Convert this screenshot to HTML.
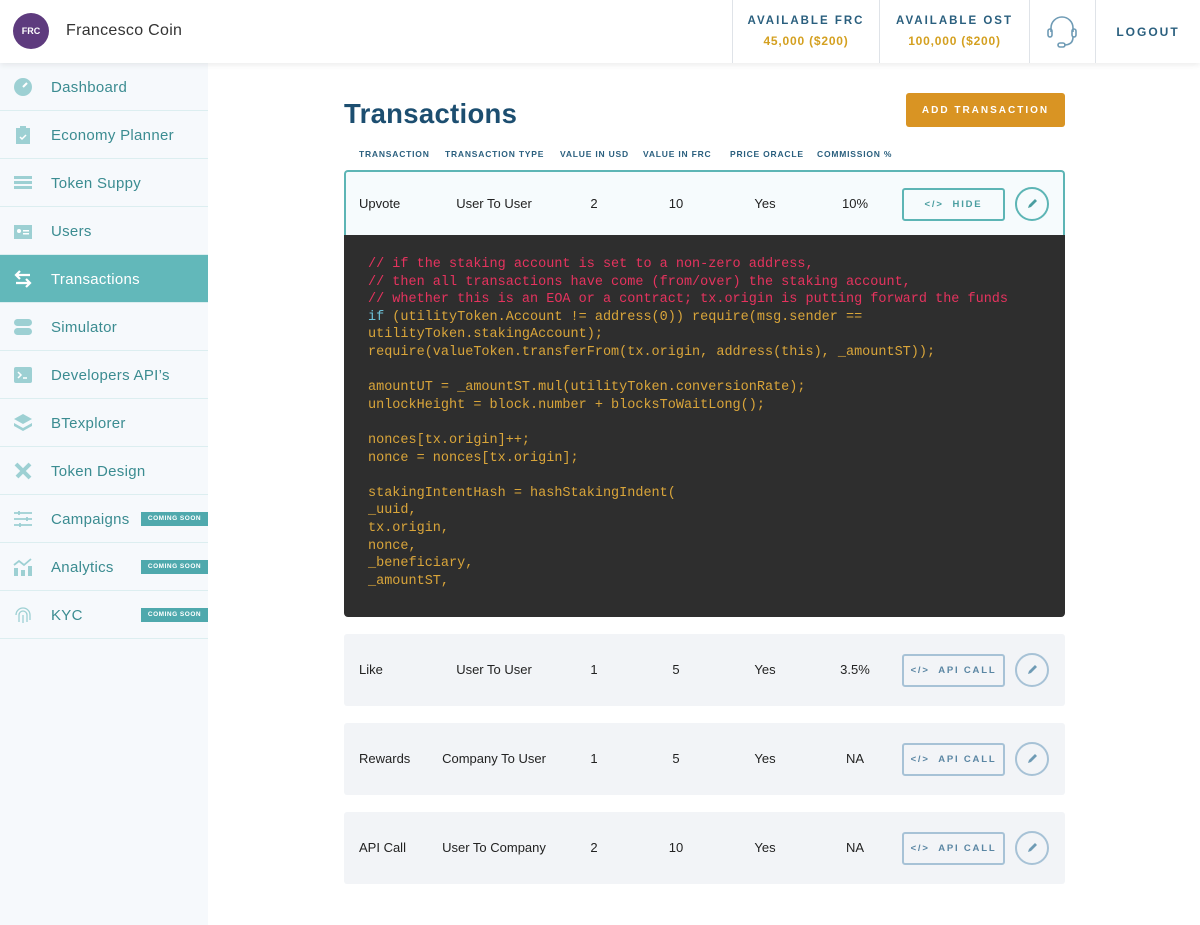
<!DOCTYPE html>
<html><head><meta charset="utf-8"><style>
*{margin:0;padding:0;box-sizing:border-box}
body{width:1200px;height:925px;background:#fff;font-family:"Liberation Sans",sans-serif;position:relative;overflow:hidden}
.hdr{position:absolute;left:0;top:0;width:1200px;height:63px;background:#fff;box-shadow:0 2px 6px rgba(0,0,0,.08);z-index:2}
.av{position:absolute;left:13px;top:13px;width:36px;height:36px;border-radius:50%;background:#5e3b7e;color:#fff;font-size:9px;font-weight:bold;text-align:center;line-height:36px}
.name{position:absolute;left:66px;top:22px;font-size:16px;color:#333;letter-spacing:.3px}
.sep{position:absolute;top:0;width:1px;height:63px;background:#dfe3e8}
.bal{position:absolute;top:15px;text-align:center;font-weight:bold;letter-spacing:2px;font-size:11.5px;color:#2a5f7e}
.bal div{color:#d4a020;font-size:12px;letter-spacing:.8px;margin-top:7px}
.side{position:absolute;left:0;top:63px;width:208px;height:862px;background:#f6f9fc}
.it{height:48px;border-bottom:1px solid #dceef0;position:relative;color:#3b8c91;font-size:15px;letter-spacing:.3px}
.it span.t{position:absolute;left:51px;top:16px}
.it .ic{position:absolute;left:13px;top:14px;width:20px;height:20px}
.it.act{background:#62b8ba;color:#fff}
.cs{position:absolute;left:141px;top:17px;width:67px;height:14px;background:#4fa9ad;color:#fff;font-size:6.5px;font-weight:bold;text-align:center;line-height:14px;letter-spacing:.5px}
h1{position:absolute;left:344px;top:98px;font-size:27.5px;color:#1c4e70;font-weight:bold;letter-spacing:.3px}
.add{position:absolute;left:906px;top:93px;width:159px;height:34px;background:#d99423;border-radius:3px;color:#fff;font-size:10px;font-weight:bold;letter-spacing:2px;text-align:center;line-height:35px}
.th{position:absolute;top:149px;font-size:8.5px;font-weight:bold;color:#2a5f7e;letter-spacing:.8px}
.row{position:absolute;left:344px;width:721px;height:72px;background:#f2f4f7;border-radius:3px;font-size:13px;color:#222}
.row.first{top:170px;height:66px;background:#f6fbfd;border:2px solid #5db5b5;border-bottom:none;border-radius:4px 4px 0 0}
.c{position:absolute;top:28px}
.first .c{top:24px}
.cc{transform:translateX(-50%)}
.btn{position:absolute;left:558px;top:20px;width:103px;height:33px;border:2px solid #a7c2d6;border-radius:3px;font-size:9.5px;font-weight:bold;color:#5a86a3;letter-spacing:1.8px;text-align:center;line-height:29px}
.first .btn{left:556px;top:16px;border-color:#5db5b5;color:#4a9ea0}
.ed{position:absolute;left:671px;top:19px;width:34px;height:34px;border:2px solid #a7c2d6;border-radius:50%}
.first .ed{left:669px;top:15px;border-color:#5db5b5}
.code{position:absolute;left:344px;top:235px;width:721px;height:382px;background:#2e2e2e;border-radius:0 0 4px 4px;padding:21px 0 0 24px;font-family:"Liberation Mono",monospace;font-size:13.5px;line-height:17.6px;color:#d9a53a;white-space:pre}
.cm{color:#e5335e}.kw{color:#6cc0d6}
</style></head><body>
<div class="hdr">
<div class="av">FRC</div><div class="name">Francesco Coin</div>
<div class="sep" style="left:732px"></div><div class="sep" style="left:879px"></div><div class="sep" style="left:1029px"></div><div class="sep" style="left:1095px"></div>
<div class="bal" style="left:733px;width:146px">AVAILABLE FRC<div>45,000 ($200)</div></div>
<div class="bal" style="left:880px;width:149px">AVAILABLE OST<div>100,000 ($200)</div></div>
<svg style="position:absolute;left:1046px;top:15px" width="32" height="34" viewBox="0 0 32 34" fill="none" stroke="#6f9bb5" stroke-width="1.6"><path d="M5 17V13a11 11 0 0 1 22 0v4"/><rect x="2" y="14" width="4" height="8" rx="2"/><rect x="26" y="14" width="4" height="8" rx="2"/><path d="M27 22c0 6-4 8-9 8"/><rect x="12" y="28" width="7" height="4" rx="2"/></svg>
<div class="bal" style="left:1096px;width:104px;top:25px;font-size:12px">LOGOUT</div>
</div>
<div class="side">
<div class="it"><svg class="ic" viewBox="0 0 20 20"><circle cx="10" cy="10" r="9" fill="#9dd0d3"/><path d="M10 10l4-4" stroke="#fff" stroke-width="2"/></svg><span class="t">Dashboard</span></div>
<div class="it"><svg class="ic" viewBox="0 0 20 20"><rect x="3" y="3" width="14" height="16" fill="#9dd0d3"/><rect x="7" y="1" width="6" height="4" fill="#9dd0d3"/><path d="M7 12l2 2 4-4" stroke="#fff" stroke-width="1.5" fill="none"/></svg><span class="t">Economy Planner</span></div>
<div class="it"><svg class="ic" viewBox="0 0 20 20" fill="#9dd0d3"><rect x="1" y="3" width="18" height="3"/><rect x="1" y="8" width="18" height="3"/><rect x="1" y="13" width="18" height="3"/></svg><span class="t">Token Suppy</span></div>
<div class="it"><svg class="ic" viewBox="0 0 20 20"><rect x="1" y="4" width="18" height="14" fill="#9dd0d3"/><circle cx="6" cy="10" r="2" fill="#fff"/><rect x="10" y="9" width="6" height="1.5" fill="#fff"/><rect x="10" y="12" width="6" height="1.5" fill="#fff"/></svg><span class="t">Users</span></div>
<div class="it act"><svg class="ic" viewBox="0 0 20 20" stroke="#fff" stroke-width="2.2" fill="none"><path d="M17 6H4M7 2L3 6l4 4M3 14h13M13 10l4 4-4 4"/></svg><span class="t">Transactions</span></div>
<div class="it"><svg class="ic" viewBox="0 0 20 20" fill="#9dd0d3"><rect x="1" y="2" width="18" height="7" rx="3.5"/><rect x="1" y="11" width="18" height="7" rx="3.5"/></svg><span class="t">Simulator</span></div>
<div class="it"><svg class="ic" viewBox="0 0 20 20"><rect x="1" y="2" width="18" height="16" rx="2" fill="#9dd0d3"/><path d="M5 7l3 3-3 3M10 13h4" stroke="#fff" stroke-width="1.5" fill="none"/></svg><span class="t">Developers API’s</span></div>
<div class="it"><svg class="ic" viewBox="0 0 20 20" fill="#9dd0d3"><path d="M10 1l9 5-9 5-9-5z"/><path d="M1 10l9 5 9-5v3l-9 5-9-5z"/></svg><span class="t">BTexplorer</span></div>
<div class="it"><svg class="ic" viewBox="0 0 20 20" stroke="#9dd0d3" stroke-width="4"><path d="M3 3l14 14M17 3L4 16"/></svg><span class="t">Token Design</span></div>
<div class="it"><svg class="ic" viewBox="0 0 20 20" stroke="#9dd0d3" stroke-width="1.8"><path d="M1 4h18M1 10h18M1 16h18M6 2v4M14 8v4M7 14v4"/></svg><span class="t">Campaigns</span><div class="cs">COMING SOON</div></div>
<div class="it"><svg class="ic" viewBox="0 0 20 20" fill="#9dd0d3"><rect x="1" y="11" width="4" height="8"/><rect x="8" y="13" width="4" height="6"/><rect x="15" y="9" width="4" height="10"/><path d="M1 8l5-4 5 4 7-6" stroke="#9dd0d3" stroke-width="1.8" fill="none"/></svg><span class="t">Analytics</span><div class="cs">COMING SOON</div></div>
<div class="it"><svg class="ic" viewBox="0 0 20 20" stroke="#9dd0d3" stroke-width="1.3" fill="none"><path d="M3 10a7 7 0 0 1 14 0v5M6 17v-7a4 4 0 0 1 8 0v7M10 10v8"/></svg><span class="t">KYC</span><div class="cs">COMING SOON</div></div>
</div>
<h1>Transactions</h1>
<div class="add">ADD TRANSACTION</div>
<div class="th" style="left:359px">TRANSACTION</div><div class="th" style="left:445px">TRANSACTION TYPE</div><div class="th" style="left:560px">VALUE IN USD</div><div class="th" style="left:643px">VALUE IN FRC</div><div class="th" style="left:730px">PRICE ORACLE</div><div class="th" style="left:817px">COMMISSION %</div>

<div class="row first"><span class="c" style="left:13px">Upvote</span><span class="c cc" style="left:148px">User To User</span><span class="c cc" style="left:248px">2</span><span class="c cc" style="left:330px">10</span><span class="c cc" style="left:419px">Yes</span><span class="c cc" style="left:509px">10%</span><div class="btn">&lt;/&gt;&nbsp; HIDE</div><div class="ed"><svg width="30" height="30" viewBox="0 0 30 30"><path d="M11 19l1-3 6-6 2 2-6 6z" fill="#4a9ea0"/></svg></div></div>
<div class="code"><span class="cm">// if the staking account is set to a non-zero address,
// then all transactions have come (from/over) the staking account,
// whether this is an EOA or a contract; tx.origin is putting forward the funds</span>
<span class="kw">if</span> (utilityToken.Account != address(0)) require(msg.sender ==
utilityToken.stakingAccount);
require(valueToken.transferFrom(tx.origin, address(this), _amountST));

amountUT = _amountST.mul(utilityToken.conversionRate);
unlockHeight = block.number + blocksToWaitLong();

nonces[tx.origin]++;
nonce = nonces[tx.origin];

stakingIntentHash = hashStakingIndent(
_uuid,
tx.origin,
nonce,
_beneficiary,
_amountST,</div>

<div class="row" style="top:634px"><span class="c" style="left:15px">Like</span><span class="c cc" style="left:150px">User To User</span><span class="c cc" style="left:250px">1</span><span class="c cc" style="left:332px">5</span><span class="c cc" style="left:421px">Yes</span><span class="c cc" style="left:511px">3.5%</span><div class="btn">&lt;/&gt;&nbsp; API CALL</div><div class="ed"><svg width="30" height="30" viewBox="0 0 30 30"><path d="M11 19l1-3 6-6 2 2-6 6z" fill="#6f9bb5"/></svg></div></div>
<div class="row" style="top:723px"><span class="c" style="left:15px">Rewards</span><span class="c cc" style="left:150px">Company To User</span><span class="c cc" style="left:250px">1</span><span class="c cc" style="left:332px">5</span><span class="c cc" style="left:421px">Yes</span><span class="c cc" style="left:511px">NA</span><div class="btn">&lt;/&gt;&nbsp; API CALL</div><div class="ed"><svg width="30" height="30" viewBox="0 0 30 30"><path d="M11 19l1-3 6-6 2 2-6 6z" fill="#6f9bb5"/></svg></div></div>
<div class="row" style="top:812px"><span class="c" style="left:15px">API Call</span><span class="c cc" style="left:150px">User To Company</span><span class="c cc" style="left:250px">2</span><span class="c cc" style="left:332px">10</span><span class="c cc" style="left:421px">Yes</span><span class="c cc" style="left:511px">NA</span><div class="btn">&lt;/&gt;&nbsp; API CALL</div><div class="ed"><svg width="30" height="30" viewBox="0 0 30 30"><path d="M11 19l1-3 6-6 2 2-6 6z" fill="#6f9bb5"/></svg></div></div>
</body></html>
